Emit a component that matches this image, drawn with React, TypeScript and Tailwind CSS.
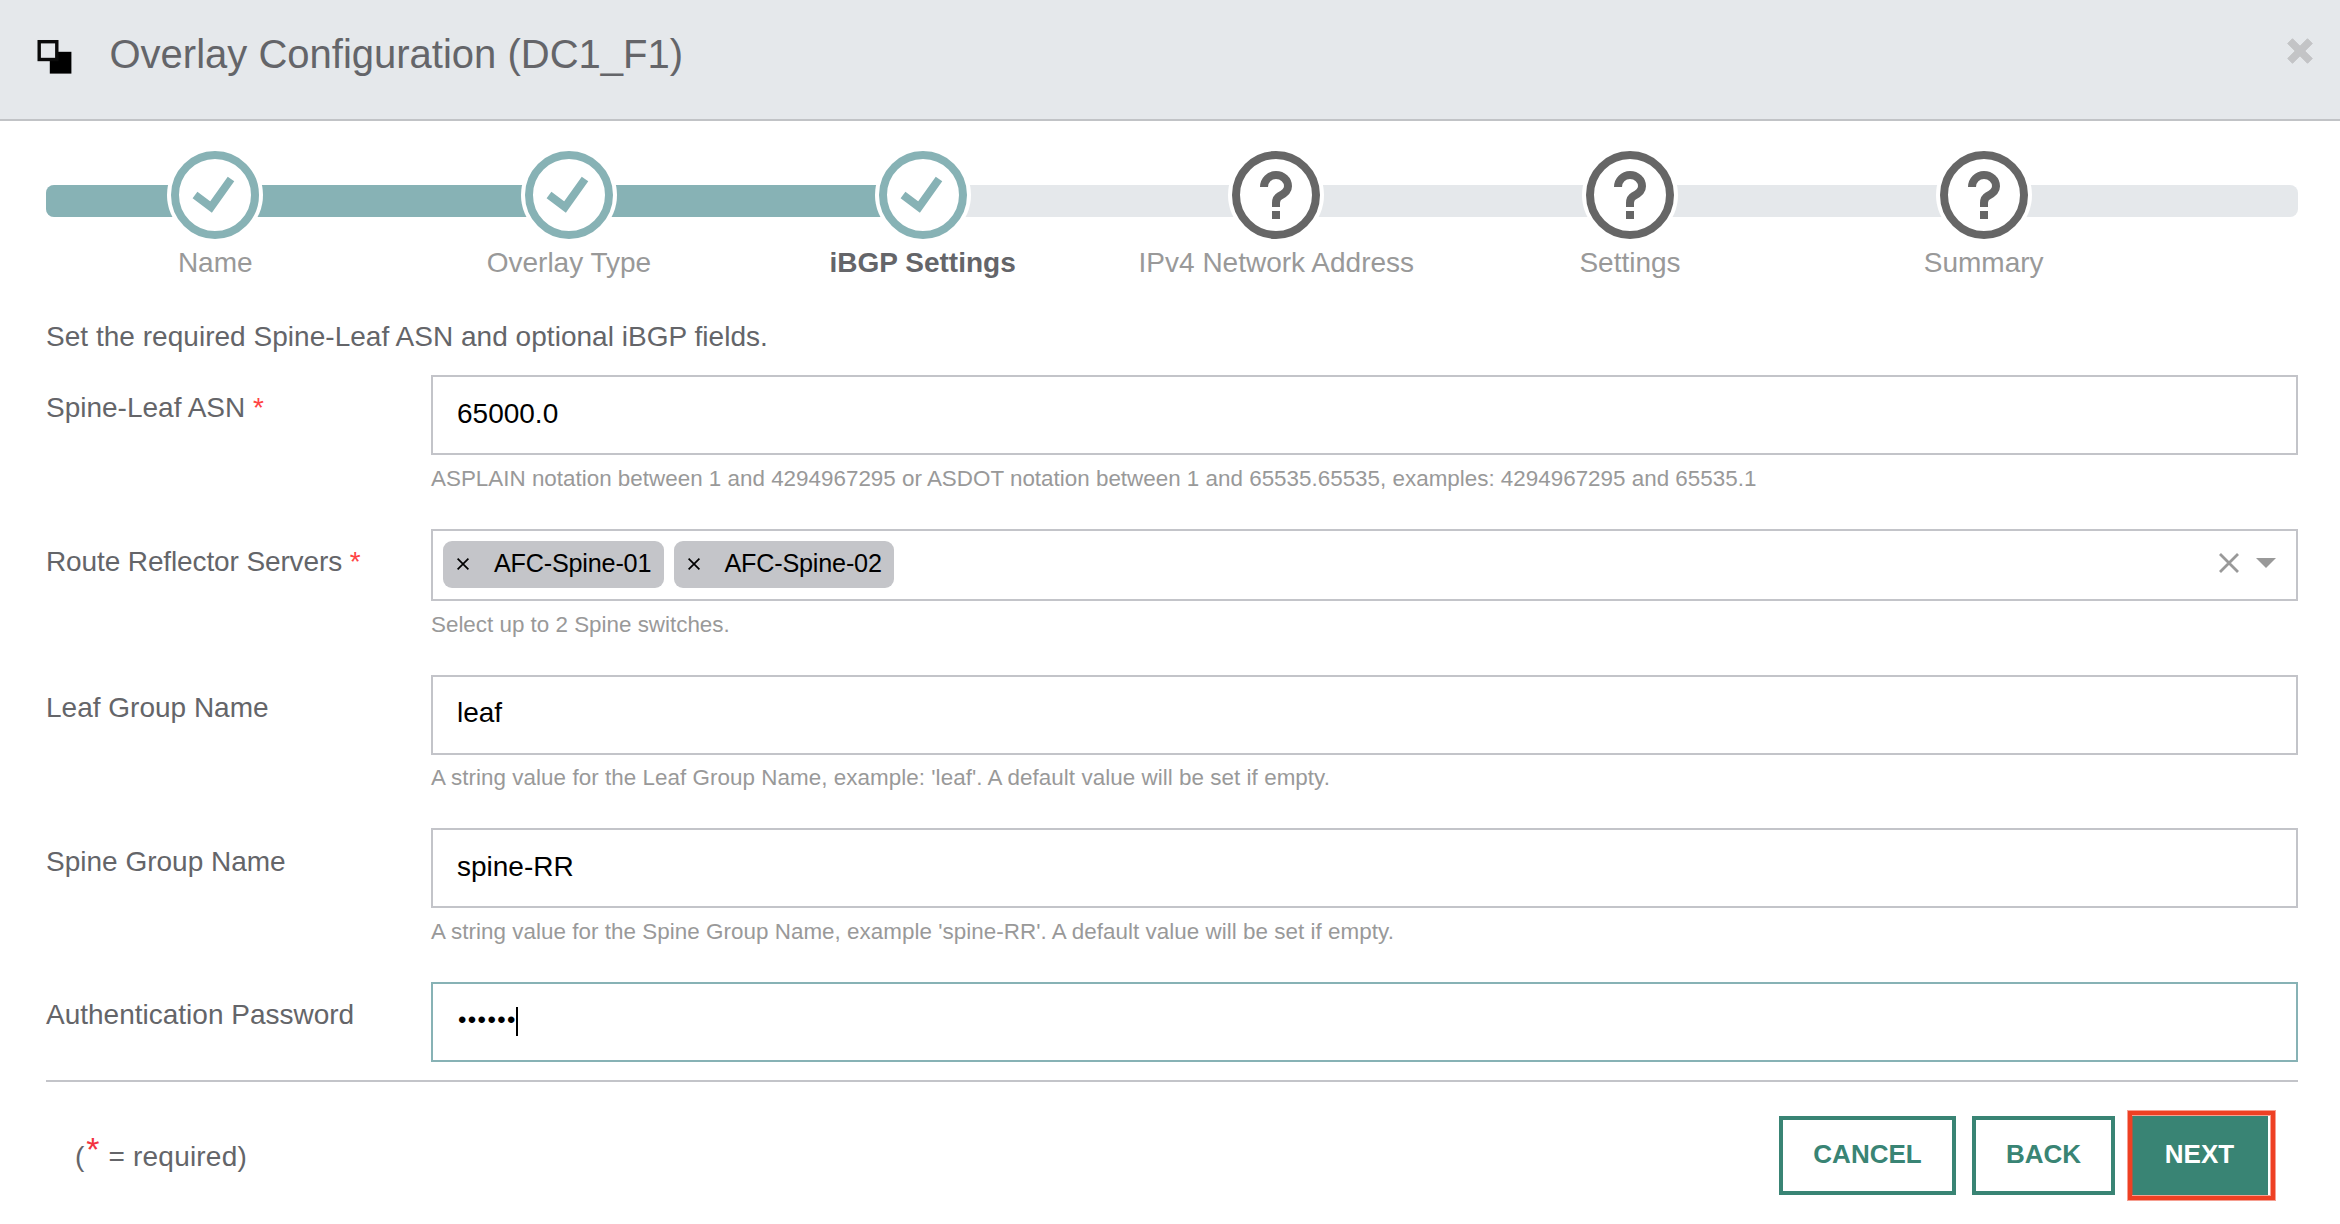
import type { ReactNode } from "react";

type StepState = "done" | "current" | "pending";

const STEPS: { label: string; state: StepState }[] = [
  { label: "Name", state: "done" },
  { label: "Overlay Type", state: "done" },
  { label: "iBGP Settings", state: "current" },
  { label: "IPv4 Network Address", state: "pending" },
  { label: "Settings", state: "pending" },
  { label: "Summary", state: "pending" },
];

const SERVERS = ["AFC-Spine-01", "AFC-Spine-02"];

function OverlayIcon() {
  return (
    <svg width="40" height="40" viewBox="0 0 40 40" className="blur-[0.7px]" aria-hidden="true">
      <rect x="15.8" y="15.8" width="21.6" height="21.8" fill="#000" />
      <rect x="5.2" y="5.7" width="17.6" height="17.8" fill="#e5e8eb" stroke="#0a0a0a" strokeWidth="3.4" />
    </svg>
  );
}

function CloseIcon() {
  return (
    <svg width="26" height="26" viewBox="0 0 26 26" aria-hidden="true">
      <path
        d="M5.5.7 13 8.2 20.5.7 25.3 5.5 17.8 13 25.3 20.5 20.5 25.3 13 17.8 5.5 25.3.7 20.5 8.2 13 .7 5.5z"
        fill="#c3c4c6"
        stroke="#c3c4c6"
        strokeWidth="1"
        strokeLinejoin="round"
      />
    </svg>
  );
}

function StatusIcon({ done }: { done: boolean }) {
  return (
    <svg
      width="88"
      height="88"
      viewBox="1 1 22 22"
      fill="none"
      stroke={done ? "#87b2b5" : "#666666"}
      strokeWidth="2"
      aria-hidden="true"
    >
      <circle cx="12" cy="12" r="10" />
      {done ? (
        <path d="M7 12l4 3 5-7" />
      ) : (
        <path d="M12 15v-1c0-.9.3-1.4 1-1.8 1-.5 2-1.1 2-2.4C15 8.2 13.66 7 12 7S9 8.34 9 10M12 16v2" />
      )}
    </svg>
  );
}

function Stepper() {
  return (
    <div className="grid">
      <div className="mt-[38px] h-8 overflow-hidden rounded-lg bg-[#e5e8eb] [grid-area:1/1]">
        <div className="h-full w-[877px] bg-[#87b2b5]" />
      </div>
      <div className="-ml-[7.6px] flex [grid-area:1/1]">
        {STEPS.map(({ label, state }) => (
          <div key={label} className="flex w-[353.7px] flex-col items-center">
            <div className="rounded-full bg-white p-1">
              <StatusIcon done={state !== "pending"} />
            </div>
            <div
              className={
                state === "current"
                  ? "mt-1.5 leading-7 font-bold text-[#646569]"
                  : "mt-1.5 leading-7 text-[#999999]"
              }
            >
              {label}
            </div>
          </div>
        ))}
      </div>
    </div>
  );
}

function Required() {
  return <span className="text-[#ff4343]"> *</span>;
}

function Field({
  label,
  required,
  help,
  helpClass = "mt-2.5 mb-9",
  labelClass = "pt-[19px]",
  children,
}: {
  label: string;
  required?: boolean;
  help?: string;
  helpClass?: string;
  labelClass?: string;
  children: ReactNode;
}) {
  return (
    <div className="flex items-start">
      <div className={`w-[385px] shrink-0 leading-7 text-[#646569] ${labelClass}`}>
        {label}
        {required && <Required />}
      </div>
      <div className="flex-1">
        {children}
        {help && (
          <div className={`text-[22.4px] leading-7 text-[#999999] ${helpClass}`}>{help}</div>
        )}
      </div>
    </div>
  );
}

function TextBox({ focused, children }: { focused?: boolean; children: ReactNode }) {
  return (
    <div
      className={`flex h-20 items-center border-2 px-6 pb-0.5 text-black ${
        focused ? "border-[#87b2b5]" : "border-[#c3c4c9]"
      }`}
    >
      {children}
    </div>
  );
}

function Chip({ children }: { children: ReactNode }) {
  return (
    <div className="flex h-[47px] items-center rounded-[9px] bg-[#c4c5c9] px-[14px] text-black">
      <svg width="12" height="12" viewBox="0 0 12 12" stroke="#000" strokeWidth="1.7" className="mb-0.5" aria-hidden="true">
        <path d="M.6.6l10.8 10.8M11.4.6L.6 11.4" />
      </svg>
      <span className="ml-[25px] w-[155.5px] pb-[4px] text-[25.2px] leading-7 tracking-[-0.2px] whitespace-nowrap">
        {children}
      </span>
    </div>
  );
}

function ServerSelect() {
  return (
    <div className="flex h-[72px] items-center border-2 border-[#c3c4c9] pr-5 pl-[10px]">
      <div className="flex gap-[10px] pb-px">
        {SERVERS.map((name) => (
          <Chip key={name}>{name}</Chip>
        ))}
      </div>
      <div className="ml-auto flex items-center pb-1">
        <svg width="20" height="20" viewBox="0 0 20 20" stroke="#999" strokeWidth="2.8" aria-hidden="true">
          <path d="M1 1l18 18M19 1L1 19" />
        </svg>
        <svg width="20" height="10" viewBox="0 0 20 10" className="ml-[17px]" aria-hidden="true">
          <path d="M0 0h20L10 10z" fill="#999" />
        </svg>
      </div>
    </div>
  );
}

export default function App() {
  return (
    <div className="min-h-[1224px] w-[2340px] bg-white font-['Liberation_Sans',Arial,sans-serif] text-[28px]">
      <header className="flex h-[121px] items-start border-b-2 border-[#c1c3c6] bg-[#e5e8eb] pr-[27px] pl-[33.5px]">
        <div className="mt-9">
          <OverlayIcon />
        </div>
        <h1 className="mt-[30px] ml-9 text-[40px] leading-[48px] text-[#646569]">
          Overlay Configuration (DC1_F1)
        </h1>
        <button className="mt-[38px] ml-auto">
          <CloseIcon />
        </button>
      </header>

      <main className="pt-[26px] pr-[42px] pl-[46px]">
        <Stepper />
        <p className="mt-[46px] leading-7 tracking-[0.03px] text-[#646569]">
          Set the required Spine-Leaf ASN and optional iBGP fields.
        </p>

        <div className="mt-6 flex flex-col">
          <Field
            label="Spine-Leaf ASN"
            required
            helpClass="mt-2.5 mb-9 tracking-[0.01px]"
            help="ASPLAIN notation between 1 and 4294967295 or ASDOT notation between 1 and 65535.65535, examples: 4294967295 and 65535.1"
          >
            <TextBox>65000.0</TextBox>
          </Field>
          <Field
            label="Route Reflector Servers"
            required
            labelClass="pt-[19px] tracking-[-0.12px]"
            help="Select up to 2 Spine switches."
          >
            <ServerSelect />
          </Field>
          <Field
            label="Leaf Group Name"
            helpClass="mt-[9px] mb-9 tracking-[0.05px]"
            help="A string value for the Leaf Group Name, example: 'leaf'. A default value will be set if empty."
          >
            <TextBox>
              <span className="pb-0.5">leaf</span>
            </TextBox>
          </Field>
          <Field
            label="Spine Group Name"
            labelClass="pt-5"
            helpClass="mt-2.5 mb-9 tracking-[0.04px]"
            help="A string value for the Spine Group Name, example 'spine-RR'. A default value will be set if empty."
          >
            <TextBox>spine-RR</TextBox>
          </Field>
          <Field label="Authentication Password">
            <TextBox focused>
              <span className="mr-[-1px] ml-px pb-[3px] text-[24px] tracking-[1.4px]">••••••</span>
              <span className="h-[29px] w-[2px] bg-black" />
            </TextBox>
          </Field>
        </div>

        <footer className="mt-[18px] flex border-t-2 border-[#c3c4c9] pt-[34px] pr-[30px] pl-[29px]">
          <div className="mt-[21px] leading-7 text-[#646569]">
            (<span className="relative -top-[5px] ml-[2px] text-[34px] leading-none text-[#f2333f]">*</span>
            <span className="ml-px tracking-[0.2px]"> = required)</span>
          </div>
          <div className="ml-auto flex gap-4 text-[26px] font-bold">
            <button className="h-[79px] w-[177px] border-4 border-[#398474] pb-[3px] text-[#398474]">
              CANCEL
            </button>
            <button className="h-[79px] w-[143px] border-4 border-[#398474] pb-[3px] text-[#398474]">
              BACK
            </button>
            <div className="relative">
              <button className="h-[79px] w-[137px] bg-[#398474] pb-[3px] text-white">NEXT</button>
              <div className="absolute -top-[6px] -left-1 h-[91px] w-[149px] border border-[#ee4023]/50">
                <div className="h-full border-4 border-[#ee4023]">
                  <div className="h-full border border-[#ee4023]/50" />
                </div>
              </div>
            </div>
          </div>
        </footer>
      </main>
    </div>
  );
}
